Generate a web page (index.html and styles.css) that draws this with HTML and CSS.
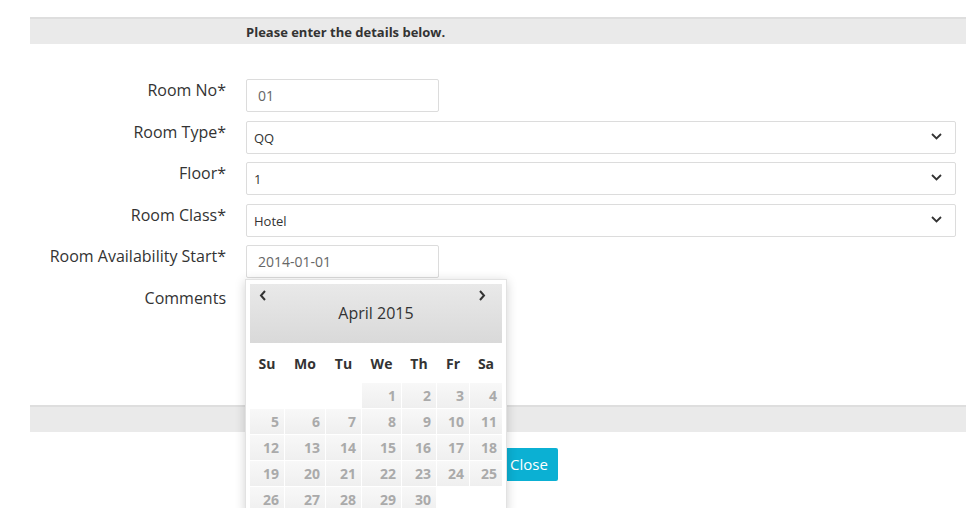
FILE: index.html
```html
<!DOCTYPE html>
<html>
<head>
<meta charset="utf-8">
<link rel="stylesheet" href="styles.css">
</head>
<body>
<div class="page">
  <div class="bar bar-top"><span class="bar-title">Please enter the details below.</span></div>
  <div class="form">
    <label class="lbl">Room No*</label>
    <div class="field"><div class="input short">01</div></div>

    <label class="lbl">Room Type*</label>
    <div class="field"><div class="select"><span>QQ</span><svg class="chev" width="11" height="7" viewBox="0 0 11 7"><path d="M1 1 L5.5 5.5 L10 1" fill="none" stroke="#333" stroke-width="1.8"/></svg></div></div>

    <label class="lbl">Floor*</label>
    <div class="field"><div class="select"><span>1</span><svg class="chev" width="11" height="7" viewBox="0 0 11 7"><path d="M1 1 L5.5 5.5 L10 1" fill="none" stroke="#333" stroke-width="1.8"/></svg></div></div>

    <label class="lbl">Room Class*</label>
    <div class="field"><div class="select"><span>Hotel</span><svg class="chev" width="11" height="7" viewBox="0 0 11 7"><path d="M1 1 L5.5 5.5 L10 1" fill="none" stroke="#333" stroke-width="1.8"/></svg></div></div>

    <label class="lbl">Room Availability Start*</label>
    <div class="field date-field">
      <div class="input short">2014-01-01</div>
      <div class="datepicker">
        <div class="dp-head">
          <div class="dp-nav">
            <svg width="8" height="11" viewBox="0 0 8 11"><path d="M6 1 L2 5.5 L6 10" fill="none" stroke="#333" stroke-width="2"/></svg>
            <svg width="8" height="11" viewBox="0 0 8 11"><path d="M2 1 L6 5.5 L2 10" fill="none" stroke="#333" stroke-width="2"/></svg>
          </div>
          <div class="dp-title">April 2015</div>
        </div>
        <table class="dp-table">
          <colgroup><col class="c34"><col class="c40"><col class="c35"><col class="c39"><col class="c34"><col class="c32"><col class="c32"></colgroup>
          <thead>
            <tr><th>Su</th><th>Mo</th><th>Tu</th><th>We</th><th>Th</th><th>Fr</th><th>Sa</th></tr>
          </thead>
          <tbody>
            <tr><td class="empty"></td><td class="empty"></td><td class="empty"></td><td>1</td><td>2</td><td>3</td><td>4</td></tr>
            <tr><td>5</td><td>6</td><td>7</td><td>8</td><td>9</td><td>10</td><td>11</td></tr>
            <tr><td>12</td><td>13</td><td>14</td><td>15</td><td>16</td><td>17</td><td>18</td></tr>
            <tr><td>19</td><td>20</td><td>21</td><td>22</td><td>23</td><td>24</td><td>25</td></tr>
            <tr><td>26</td><td>27</td><td>28</td><td>29</td><td>30</td><td class="empty"></td><td class="empty"></td></tr>
          </tbody>
        </table>
      </div>
    </div>

    <label class="lbl">Comments</label>
    <div class="field comments"></div>
  </div>
  <div class="bar bar-bottom"></div>
  <div class="actions"><button class="btn-close">Close</button></div>
</div>
</body>
</html>
```
FILE: styles.css
```css
* { box-sizing: border-box; }
html, body { margin: 0; padding: 0; background: #fff; }
body {
  font-family: "Open Sans", "Liberation Sans", sans-serif;
  color: #333;
  width: 969px;
  height: 508px;
  overflow: hidden;
}
.page {
  margin: 0 3px 0 30px;
  padding-top: 17px;
}
.bar {
  height: 27px;
  background: #eaeaea;
  border-top: 2px solid #dedede;
}
.bar-top {
  display: flex;
  align-items: center;
  padding-left: 216px;
}
.bar-title {
  font-size: 13px;
  font-weight: 700;
  color: #333;
}
.form {
  display: grid;
  grid-template-columns: 196px 1fr;
  grid-template-rows: repeat(5, 33px) 118px;
  column-gap: 20px;
  row-gap: 8.5px;
  padding: 35px 10px 0 0;
}
.lbl {
  text-align: right;
  font-size: 16px;
  line-height: 22px;
  color: #333;
}
.field { position: relative; }
.input {
  height: 33px;
  border: 1px solid #dcdcdc;
  border-radius: 2px;
  padding: 0 11px;
  font-size: 14px;
  line-height: 31px;
  color: #666;
  background: #fff;
}
.short { width: 193px; }
.select {
  height: 33px;
  border: 1px solid #dcdcdc;
  border-radius: 2px;
  padding: 1px 13px 0 7px;
  font-size: 13px;
  color: #333;
  display: flex;
  align-items: center;
  justify-content: space-between;
  background: #fff;
}
.chev { display: block; margin-top: -3px; }
.datepicker {
  position: absolute;
  left: -1px;
  top: 34px;
  width: 262px;
  background: #fff;
  border: 1px solid #e2e2e2;
  box-shadow: 0 2px 10px rgba(0,0,0,0.18);
  padding: 4px 4px 0 4px;
  z-index: 10;
}
.dp-head {
  height: 59px;
  background: linear-gradient(#e9e9e9, #d9d9d9);
  padding-top: 6px;
}
.dp-nav {
  display: flex;
  justify-content: space-between;
  height: 12px;
  padding: 0 16px 0 9px;
}
.dp-title {
  text-align: center;
  font-size: 16px;
  line-height: 22px;
  color: #333;
}
.dp-table {
  width: 253px;
  border-collapse: separate;
  border-spacing: 1px;
  margin: 0 -1px;
  table-layout: fixed;
}
.c34 { width: 34px; } .c40 { width: 40px; } .c35 { width: 35px; }
.c39 { width: 39px; } .c32 { width: 32px; }
.dp-table th {
  height: 38px;
  font-size: 14px;
  font-weight: 700;
  color: #333;
  text-align: center;
  padding: 0;
}
.dp-table td {
  height: 25px;
  font-size: 14px;
  font-weight: 700;
  color: #aaa;
  text-align: right;
  padding: 0 5px 0 0;
  background: linear-gradient(#f8f8f8, #efefef);
}
.dp-table td.empty { background: #fff; }
.actions {
  padding-top: 16px;
  padding-left: 468px;
}
.btn-close {
  width: 60px;
  height: 33px;
  border: 0;
  border-radius: 2px;
  background: #0bb0d3;
  color: #fff;
  font-family: "Open Sans", "Liberation Sans", sans-serif;
  font-size: 15px;
  padding: 0 0 0 12px;
  text-align: left;
}
```
